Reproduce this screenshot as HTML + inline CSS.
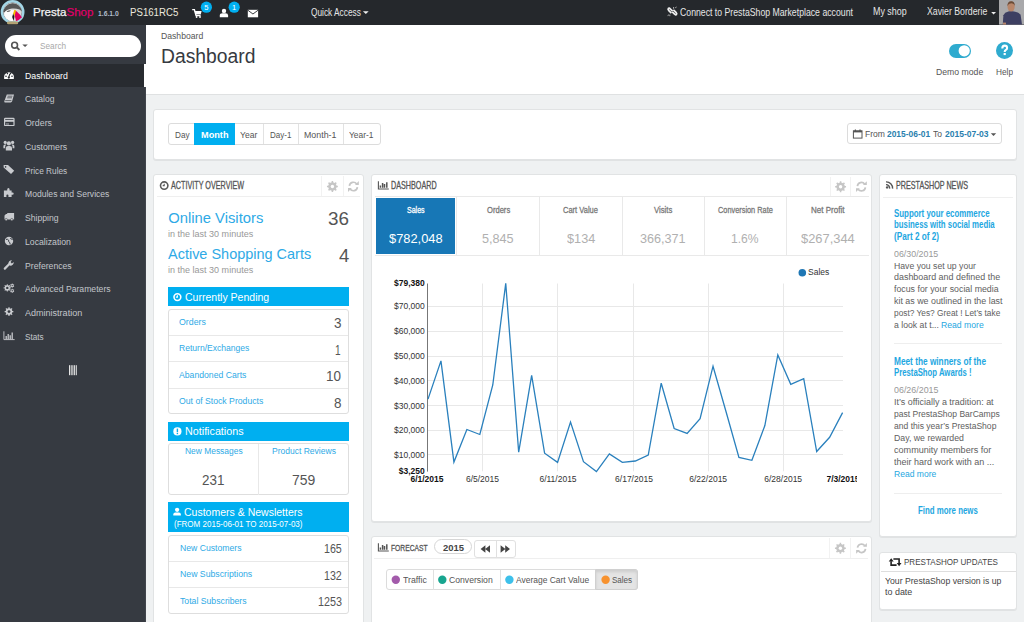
<!DOCTYPE html>
<html><head><meta charset="utf-8"><title>Dashboard</title>
<style>
*{box-sizing:border-box;margin:0;padding:0}
html,body{width:1024px;height:622px;overflow:hidden;background:#eff1f2;font-family:"Liberation Sans",sans-serif;color:#555;position:relative}
.a{position:absolute}
.t{position:absolute;white-space:nowrap;transform-origin:0 0;font-family:"Liberation Sans",sans-serif}
</style></head><body>
<div class="a" style="left:0px;top:0px;width:1024.00px;height:25.00px;background:#25282c"></div>
<div class="a" style="left:144px;top:25px;width:880.00px;height:70.00px;background:#fff"></div>
<div class="a" style="left:146px;top:94px;width:878.00px;height:1.00px;background:#dfe1e2"></div>
<div class="a" style="left:0px;top:25px;width:146.00px;height:38.50px;background:#363a41"></div>
<div class="a" style="left:0px;top:63.5px;width:144.00px;height:23.20px;background:#282b30"></div>
<div class="a" style="left:0px;top:86.7px;width:146.00px;height:535.30px;background:#363a41"></div>
<div class="a" style="left:145px;top:86.7px;width:1.00px;height:535.30px;background:#41454c"></div>
<div class="a" style="left:5.1px;top:34.6px;width:136.30px;height:22.00px;background:#fff;border-radius:11px"></div>
<div class="a" style="left:948.7px;top:43.9px;width:22.20px;height:13.80px;background:#2fabcf;border-radius:7px"></div>
<div class="a" style="left:153px;top:108.5px;width:864.00px;height:51.00px;background:#fff;border:1px solid #e1e3e4;border-radius:3px;box-shadow:0 1px 0 rgba(0,0,0,0.06)"></div>
<div class="a" style="left:168.3px;top:123.3px;width:212.30px;height:21.40px;border:1px solid #dcdcdc;border-radius:3px;background:#fff"></div>
<div class="a" style="left:194.1px;top:123.3px;width:40.70px;height:21.40px;background:#00aff0"></div>
<div class="a" style="left:263.3px;top:123.8px;width:1.00px;height:20.40px;background:#e2e2e2"></div>
<div class="a" style="left:297.5px;top:123.8px;width:1.00px;height:20.40px;background:#e2e2e2"></div>
<div class="a" style="left:343.3px;top:123.8px;width:1.00px;height:20.40px;background:#e2e2e2"></div>
<div class="a" style="left:847.2px;top:123.4px;width:155.10px;height:20.90px;border:1px solid #dcdcdc;border-radius:3px;background:#fff"></div>
<div class="a" style="left:153px;top:173.5px;width:211.00px;height:466.50px;background:#fff;border:1px solid #e1e3e4;border-radius:3px;box-shadow:0 1px 0 rgba(0,0,0,0.06)"></div>
<div class="a" style="left:157px;top:196.2px;width:203.00px;height:1.00px;background:#efefef"></div>
<div class="a" style="left:321.4px;top:176px;width:1.00px;height:20.20px;background:#f2f2f2"></div>
<div class="a" style="left:342.7px;top:176px;width:1.00px;height:20.20px;background:#f2f2f2"></div>
<div class="a" style="left:167.8px;top:287.2px;width:181.20px;height:18.60px;background:#00aff0"></div>
<div class="a" style="left:168.4px;top:308.7px;width:180.30px;height:105.60px;border:1px solid #dedede;border-radius:3px"></div>
<div class="a" style="left:169px;top:334.7px;width:179.00px;height:1.00px;background:#e8e8e8"></div>
<div class="a" style="left:169px;top:361.3px;width:179.00px;height:1.00px;background:#e8e8e8"></div>
<div class="a" style="left:169px;top:387.9px;width:179.00px;height:1.00px;background:#e8e8e8"></div>
<div class="a" style="left:167.8px;top:422.1px;width:181.20px;height:18.60px;background:#00aff0"></div>
<div class="a" style="left:168.4px;top:443px;width:180.30px;height:52.00px;border:1px solid #dedede;border-radius:3px"></div>
<div class="a" style="left:258px;top:443.5px;width:1.00px;height:51.00px;background:#e8e8e8"></div>
<div class="a" style="left:168.2px;top:502.2px;width:180.90px;height:29.70px;background:#00aff0"></div>
<div class="a" style="left:168.4px;top:534.6px;width:180.30px;height:79.40px;border:1px solid #dedede;border-radius:3px"></div>
<div class="a" style="left:169px;top:560.6px;width:179.00px;height:1.00px;background:#e8e8e8"></div>
<div class="a" style="left:169px;top:587.3px;width:179.00px;height:1.00px;background:#e8e8e8"></div>
<div class="a" style="left:371px;top:173.5px;width:501.00px;height:348.00px;background:#fff;border:1px solid #e1e3e4;border-radius:3px;box-shadow:0 1px 0 rgba(0,0,0,0.06)"></div>
<div class="a" style="left:829.7px;top:176.5px;width:1.00px;height:19.90px;background:#f2f2f2"></div>
<div class="a" style="left:850.3px;top:176.5px;width:1.00px;height:19.90px;background:#f2f2f2"></div>
<div class="a" style="left:374.5px;top:196px;width:494.20px;height:60.00px;border-top:1px solid #e9e9e9;border-bottom:1px solid #e9e9e9"></div>
<div class="a" style="left:375.9px;top:198.1px;width:79.30px;height:55.60px;background:#1777b6"></div>
<div class="a" style="left:456px;top:197px;width:1.00px;height:58.00px;background:#e9e9e9"></div>
<div class="a" style="left:539px;top:197px;width:1.00px;height:58.00px;background:#e9e9e9"></div>
<div class="a" style="left:622px;top:197px;width:1.00px;height:58.00px;background:#e9e9e9"></div>
<div class="a" style="left:704px;top:197px;width:1.00px;height:58.00px;background:#e9e9e9"></div>
<div class="a" style="left:786px;top:197px;width:1.00px;height:58.00px;background:#e9e9e9"></div>
<div class="a" style="left:879px;top:173.5px;width:138.00px;height:363.10px;background:#fff;border:1px solid #e1e3e4;border-radius:3px;box-shadow:0 1px 0 rgba(0,0,0,0.06)"></div>
<div class="a" style="left:882.6px;top:196.5px;width:130.60px;height:1.00px;background:#efefef"></div>
<div class="a" style="left:893.7px;top:342.8px;width:108.50px;height:1.00px;background:#eeeeee"></div>
<div class="a" style="left:893.7px;top:492.5px;width:107.90px;height:1.00px;background:#eeeeee"></div>
<div class="a" style="left:879px;top:551.5px;width:138.00px;height:58.50px;background:#fff;border:1px solid #e1e3e4;border-radius:3px;box-shadow:0 1px 0 rgba(0,0,0,0.06)"></div>
<div class="a" style="left:880.5px;top:571.3px;width:135.00px;height:1.00px;background:#dedede"></div>
<div class="a" style="left:371px;top:536px;width:501.00px;height:124.00px;background:#fff;border:1px solid #e1e3e4;border-radius:3px;box-shadow:0 1px 0 rgba(0,0,0,0.06)"></div>
<div class="a" style="left:434.2px;top:539.4px;width:37.50px;height:14.20px;border:1px solid #d6d6d6;border-radius:8px"></div>
<div class="a" style="left:474.4px;top:540.3px;width:41.85px;height:18.00px;border:1px solid #e0e0e0;border-radius:3px"></div>
<div class="a" style="left:495.5px;top:540.8px;width:1.00px;height:17.00px;background:#e0e0e0"></div>
<div class="a" style="left:374.4px;top:558.4px;width:493.60px;height:1.00px;background:#efefef"></div>
<div class="a" style="left:829.4px;top:538px;width:1.00px;height:20.40px;background:#f2f2f2"></div>
<div class="a" style="left:850.3px;top:538px;width:1.00px;height:20.40px;background:#f2f2f2"></div>
<div class="a" style="left:385.6px;top:569px;width:252.80px;height:21.20px;border:1px solid #dcdcdc;border-radius:3px"></div>
<div class="a" style="left:595.3px;top:569px;width:43.10px;height:21.20px;background:#e4e4e4;border:1px solid #d0d0d0;border-radius:0 3px 3px 0;box-shadow:inset 0 2px 3px rgba(0,0,0,0.1)"></div>
<div class="a" style="left:432.5px;top:569.5px;width:1.00px;height:20.20px;background:#e0e0e0"></div>
<div class="a" style="left:499.5px;top:569.5px;width:1.00px;height:20.20px;background:#e0e0e0"></div>
<svg class="a" style="left:0;top:0" width="1024" height="622"><circle cx="12.6" cy="11.9" r="10.6" fill="none" stroke="#a3d6e6" stroke-width="2.6"/><circle cx="12.6" cy="11.9" r="9.3" fill="#d9d9d9"/><path d="M3.4 12 A9.3 9.3 0 0 1 21.9 11.4 L19.5 9.6 Q16 8.2 12 8.6 Q7 9 4.4 12.6Z" fill="#575757"/><path d="M4.2 13 Q6.4 9.6 11 9.8 L15 10.4 L14 16 L13.2 21.2 Q9 21.6 6.2 18.6 Q4 16.2 4.2 13Z" fill="#fbfbfb"/><path d="M6.6 11.6 Q8.6 10.2 11 10.8 Q9 11.8 6.6 11.6Z" fill="#222"/><path d="M15.2 10.6 Q17.4 11.6 22 17.2 Q19.4 19.8 16.2 21.2 L14.6 15.6 Z" fill="#e2005f"/><path d="M14.4 9.8 L16 10.6 L14.4 16.8 L13.2 13.2Z" fill="#f2c200"/><path d="M13.2 13.6 L14.4 16.8 L13.6 21 L12.2 17Z" fill="#1a1a1a"/><rect x="7" y="21.4" width="11.2" height="2.8" rx="1.2" fill="#b3a274"/><path d="M192.2 9.6 H194.4 L196 15.6 H200.6" fill="none" stroke="#fff" stroke-width="1.4"/><path d="M194.4 11 H201.6 L200.8 14.6 H195.6Z" fill="#fff"/><circle cx="196.6" cy="17" r="0.9" fill="#fff"/><circle cx="200" cy="17" r="0.9" fill="#fff"/><circle cx="206.4" cy="7.2" r="5.6" fill="#00aff0"/><circle cx="224" cy="10.9" r="2.2" fill="#fff"/><path d="M219.8 17.3 V15.6 Q219.8 13.3 222.4 13.3 H225.6 Q228.1 13.3 228.1 15.6 V17.3Z" fill="#fff"/><circle cx="234.2" cy="7.2" r="5.6" fill="#00aff0"/><rect x="247.8" y="9.8" width="10.3" height="7.5" fill="#fff"/><path d="M247.8 10.2 L252.95 14 L258.1 10.2" fill="none" stroke="#25282c" stroke-width="0.9"/><path d="M362.9 11.2 H368.7 L365.8 14Z" fill="#eee"/><path d="M672.6 11.2 L670.2 8.8 Q669 7.6 668.4 8.4 Q667.6 9.4 668.8 10.6 L671.4 13.2" fill="none" stroke="#eee" stroke-width="1.7"/><path d="M672.2 11.8 L674.6 14.2 Q675.8 15.4 676.4 14.6 Q677.2 13.6 676 12.4 L673.4 9.8" fill="none" stroke="#eee" stroke-width="1.7"/><path d="M673.6 7 V8.8 M675.2 7.8 L676.6 7 M667.6 15.6 L669 14.8 M669.8 16.2 V14.6" stroke="#bbb" stroke-width="0.9"/><path d="M991.2 12 H996 L993.6 14.6Z" fill="#eee"/><rect x="999" y="0" width="25" height="24.6" fill="#a9a9ab"/><path d="M1002.8 24.6 L1003.4 15.2 Q1004.6 12.2 1008.4 11.4 L1011 11 L1014 11.4 Q1018.6 12.2 1020.6 14.8 L1022 24.6Z" fill="#3d3f62"/><ellipse cx="1011.1" cy="6.6" rx="3.6" ry="5" fill="#b8866a"/><path d="M1007.4 6 Q1007.4 1.2 1011.2 1.2 Q1015 1.2 1014.8 6 Q1014 3.2 1011.2 3.2 Q1008.4 3.2 1007.4 6Z" fill="#6a4a36"/><rect x="1003" y="22.6" width="3" height="2" fill="#b8866a"/><circle cx="14.6" cy="45.2" r="2.9" fill="none" stroke="#555" stroke-width="1.6"/><path d="M16.6 47.2 L19.4 50" stroke="#555" stroke-width="1.9"/><path d="M22.3 44.4 H27.8 L25.05 46.9Z" fill="#555"/><path d="M4.2 79 Q3.8 76.4 4.6 74.8 A5 5 0 0 1 13.4 74.8 Q14.2 76.4 13.8 79Z" fill="#fff"/><circle cx="6" cy="76.2" r="0.8" fill="#282b30"/><circle cx="7.4" cy="73.6" r="0.8" fill="#282b30"/><circle cx="10.6" cy="73.6" r="0.8" fill="#282b30"/><circle cx="12" cy="76.2" r="0.8" fill="#282b30"/><path d="M8.6 78 L9.8 73.8" stroke="#282b30" stroke-width="1.1"/><circle cx="8.8" cy="77.6" r="1.1" fill="#282b30"/><path d="M6.8 94.4 H14 L12.2 101 Q11.9 102.4 10.6 102.4 H5.2 Q4 102.4 4.3 101.2 Z" fill="#c9cbcf"/><path d="M7.6 96.2 H12.4 M7.2 97.8 H12 M5.2 100.6 H11.4" stroke="#363a41" stroke-width="0.7"/><rect x="4.6" y="118.3" width="9.4" height="7.2" rx="0.6" fill="none" stroke="#c9cbcf" stroke-width="1.2"/><rect x="4.6" y="119.8" width="9.4" height="2" fill="#c9cbcf"/><path d="M6 124 H9" stroke="#c9cbcf" stroke-width="0.8"/><circle cx="8.9" cy="143.4" r="2.1" fill="#c9cbcf"/><circle cx="5.2" cy="142.4" r="1.6" fill="#c9cbcf"/><circle cx="12.6" cy="142.4" r="1.6" fill="#c9cbcf"/><path d="M5.8 150.5 V148 Q5.8 145.9 8 145.9 H9.8 Q12 145.9 12 148 V150.5Z" fill="#c9cbcf"/><path d="M3.4 148.2 V146 Q3.4 144.4 5 144.4 H6.4 L5.2 146 V148.2Z M14.4 148.2 V146 Q14.4 144.4 12.8 144.4 H11.4 L12.6 146 V148.2Z" fill="#c9cbcf"/><path d="M3.6 165 H8 L14.2 170.8 L11 173.9 L3.6 167.4Z" fill="#c9cbcf"/><circle cx="5.6" cy="166.9" r="0.8" fill="#363a41"/><path d="M3.9 190.6 H7.2 V189.6 Q7.2 188 8.4 188 Q9.6 188 9.6 189.6 V190.6 H11.6 V192.6 H12.4 Q13.7 192.6 13.7 193.7 Q13.7 194.8 12.4 194.8 H11.6 V197 H3.9Z" fill="#c9cbcf"/><path d="M6.4 197 V195.6 Q6.4 194.6 7.4 194.6 Q8.4 194.6 8.4 195.6 V197Z" fill="#363a41"/><path d="M7.2 212.9 H14.1 V219.4 H7.2Z M4.5 215.4 L6 214 H7.4 V219.4 H4.5Z" fill="#c9cbcf"/><circle cx="6.2" cy="219.6" r="1.2" fill="#c9cbcf" stroke="#363a41" stroke-width="0.5"/><circle cx="11.8" cy="219.6" r="1.2" fill="#c9cbcf" stroke="#363a41" stroke-width="0.5"/><circle cx="9" cy="241.05" r="4.2" fill="#c9cbcf"/><path d="M6 239.4 Q7.6 238.8 8.6 240.2 Q8.2 241.8 9.8 242.6 L10.2 244.6 M10.4 238 Q11 239.4 12.6 239.6" stroke="#363a41" stroke-width="1" fill="none"/><path d="M4.8 268.6 L9.6 263.8" stroke="#c9cbcf" stroke-width="2.2" stroke-linecap="round"/><path d="M8.6 264.2 A3.2 3.2 0 0 1 12 260.2 L10.6 262 L11.8 263.4 L13.7 262 A3.2 3.2 0 0 1 9.8 265.6Z" fill="#c9cbcf"/><path d="M6.84 285.14 L6.75 284.24 L7.85 284.24 L7.76 285.14 L8.93 285.62 L9.50 284.93 L10.27 285.70 L9.58 286.27 L10.06 287.44 L10.96 287.35 L10.96 288.45 L10.06 288.36 L9.58 289.53 L10.27 290.10 L9.50 290.87 L8.93 290.18 L7.76 290.66 L7.85 291.56 L6.75 291.56 L6.84 290.66 L5.67 290.18 L5.10 290.87 L4.33 290.10 L5.02 289.53 L4.54 288.36 L3.64 288.45 L3.64 287.35 L4.54 287.44 L5.02 286.27 L4.33 285.70 L5.10 284.93 L5.67 285.62Z" fill="#c9cbcf"/><circle cx="7.3" cy="287.9" r="1.2" fill="#363a41"/><path d="M11.85 284.04 L11.77 283.44 L12.63 283.44 L12.55 284.04 L13.38 284.52 L13.85 284.15 L14.28 284.90 L13.73 285.12 L13.73 286.08 L14.28 286.30 L13.85 287.05 L13.38 286.68 L12.55 287.16 L12.63 287.76 L11.77 287.76 L11.85 287.16 L11.02 286.68 L10.55 287.05 L10.12 286.30 L10.67 286.08 L10.67 285.12 L10.12 284.90 L10.55 284.15 L11.02 284.52Z" fill="#c9cbcf"/><circle cx="12.2" cy="285.6" r="0.7" fill="#363a41"/><path d="M11.85 289.24 L11.77 288.64 L12.63 288.64 L12.55 289.24 L13.38 289.72 L13.85 289.35 L14.28 290.10 L13.73 290.32 L13.73 291.28 L14.28 291.50 L13.85 292.25 L13.38 291.88 L12.55 292.36 L12.63 292.96 L11.77 292.96 L11.85 292.36 L11.02 291.88 L10.55 292.25 L10.12 291.50 L10.67 291.28 L10.67 290.32 L10.12 290.10 L10.55 289.35 L11.02 289.72Z" fill="#c9cbcf"/><circle cx="12.2" cy="290.8" r="0.7" fill="#363a41"/><path d="M8.44 308.25 L8.35 307.25 L9.65 307.25 L9.56 308.25 L10.98 308.83 L11.62 308.06 L12.54 308.98 L11.77 309.62 L12.35 311.04 L13.35 310.95 L13.35 312.25 L12.35 312.16 L11.77 313.58 L12.54 314.22 L11.62 315.14 L10.98 314.37 L9.56 314.95 L9.65 315.95 L8.35 315.95 L8.44 314.95 L7.02 314.37 L6.38 315.14 L5.46 314.22 L6.23 313.58 L5.65 312.16 L4.65 312.25 L4.65 310.95 L5.65 311.04 L6.23 309.62 L5.46 308.98 L6.38 308.06 L7.02 308.83Z" fill="#c9cbcf"/><circle cx="9" cy="311.6" r="1.4" fill="#363a41"/><path d="M3.9 331.3 V339.6 H14.6" fill="none" stroke="#c9cbcf" stroke-width="0.9"/><path d="M6.2 339.2 V336 M8.2 339.2 V334 M10.2 339.2 V335.2 M12.2 339.2 V332.6" stroke="#c9cbcf" stroke-width="1.3"/><path d="M69.5 365.2 V375.2 M71.2 365.2 V375.2 M72.9 365.2 V375.2 M74.6 365.2 V375.2 M76.3 365.2 V375.2" stroke="#e6e6e6" stroke-width="1"/><circle cx="964.2" cy="50.8" r="5.6" fill="#fff"/><circle cx="1004.5" cy="50.5" r="8.5" fill="#2fabcf"/><path d="M1002.3 48.4 Q1002.3 45.6 1004.7 45.6 Q1007.1 45.6 1007.1 47.9 Q1007.1 49.3 1005.6 50.1 Q1004.7 50.6 1004.7 52" fill="none" stroke="#fff" stroke-width="2.1"/><rect x="1003.6" y="53" width="2.2" height="2.1" fill="#fff"/><rect x="853.4" y="130.8" width="8.6" height="7.3" fill="none" stroke="#555" stroke-width="1"/><rect x="853.4" y="130.8" width="8.6" height="1.6" fill="#555"/><path d="M855.4 129.4 V131.4 M860 129.4 V131.4" stroke="#555" stroke-width="1.2"/><path d="M990.8 133.2 H996.2 L993.5 136Z" fill="#555"/><path d="M331.69 182.26 L331.59 181.06 L333.21 181.06 L333.11 182.26 L334.90 183.00 L335.67 182.08 L336.82 183.23 L335.90 184.00 L336.64 185.79 L337.84 185.69 L337.84 187.31 L336.64 187.21 L335.90 189.00 L336.82 189.77 L335.67 190.92 L334.90 190.00 L333.11 190.74 L333.21 191.94 L331.59 191.94 L331.69 190.74 L329.90 190.00 L329.13 190.92 L327.98 189.77 L328.90 189.00 L328.16 187.21 L326.96 187.31 L326.96 185.69 L328.16 185.79 L328.90 184.00 L327.98 183.23 L329.13 182.08 L329.90 183.00Z" fill="#c6c6c6"/><circle cx="332.4" cy="186.5" r="1.7" fill="#fff"/><path d="M349.40 185.90 A4.0 4.0 0 0 1 356.68 184.02" fill="none" stroke="#c6c6c6" stroke-width="1.7"/><path d="M357.40 187.10 A4.0 4.0 0 0 1 350.12 188.98" fill="none" stroke="#c6c6c6" stroke-width="1.7"/><path d="M355.00 184.90 L358.80 184.90 L358.80 181.10Z" fill="#c6c6c6"/><path d="M351.80 188.10 L348.00 188.10 L348.00 191.90Z" fill="#c6c6c6"/><circle cx="164.2" cy="185.6" r="3.7" fill="none" stroke="#5a5a5a" stroke-width="1.6"/><path d="M164.2 183.79999999999998 V185.6 H162.7" fill="none" stroke="#5a5a5a" stroke-width="1.1"/><circle cx="177.4" cy="297.1" r="3.4" fill="none" stroke="#fff" stroke-width="1.6"/><path d="M177.4 295.3 V297.1 H175.9" fill="none" stroke="#fff" stroke-width="1.1"/><circle cx="177.4" cy="431.4" r="4.1" fill="#fff"/><rect x="176.7" y="428.6" width="1.4" height="3.6" fill="#00aff0"/><rect x="176.7" y="432.9" width="1.4" height="1.3" fill="#00aff0"/><circle cx="177.1" cy="509.8" r="2.1" fill="#fff"/><path d="M173.3 515.6 V514.4 Q173.3 512.4 175.3 512.4 H178.9 Q180.9 512.4 180.9 514.4 V515.6Z" fill="#fff"/><path d="M378.4 181.2 V189 H388.8" fill="none" stroke="#555" stroke-width="1.1"/><path d="M380.4 187.8 V185.6 M382.6 187.8 V182.9 M384.5 187.8 V183.9 M386.8 187.8 V182.2" stroke="#555" stroke-width="1.5"/><path d="M839.89 182.46 L839.79 181.26 L841.41 181.26 L841.31 182.46 L843.10 183.20 L843.87 182.28 L845.02 183.43 L844.10 184.20 L844.84 185.99 L846.04 185.89 L846.04 187.51 L844.84 187.41 L844.10 189.20 L845.02 189.97 L843.87 191.12 L843.10 190.20 L841.31 190.94 L841.41 192.14 L839.79 192.14 L839.89 190.94 L838.10 190.20 L837.33 191.12 L836.18 189.97 L837.10 189.20 L836.36 187.41 L835.16 187.51 L835.16 185.89 L836.36 185.99 L837.10 184.20 L836.18 183.43 L837.33 182.28 L838.10 183.20Z" fill="#c6c6c6"/><circle cx="840.6" cy="186.7" r="1.7" fill="#fff"/><path d="M857.40 186.10 A4.0 4.0 0 0 1 864.68 184.22" fill="none" stroke="#c6c6c6" stroke-width="1.7"/><path d="M865.40 187.30 A4.0 4.0 0 0 1 858.12 189.18" fill="none" stroke="#c6c6c6" stroke-width="1.7"/><path d="M863.00 185.10 L866.80 185.10 L866.80 181.30Z" fill="#c6c6c6"/><path d="M859.80 188.30 L856.00 188.30 L856.00 192.10Z" fill="#c6c6c6"/><path d="M428 306.5 H843" stroke="#e8e8e8" stroke-width="1"/><path d="M428 331.5 H843" stroke="#e8e8e8" stroke-width="1"/><path d="M428 356.5 H843" stroke="#e8e8e8" stroke-width="1"/><path d="M428 380.5 H843" stroke="#e8e8e8" stroke-width="1"/><path d="M428 405.5 H843" stroke="#e8e8e8" stroke-width="1"/><path d="M428 430.5 H843" stroke="#e8e8e8" stroke-width="1"/><path d="M428 454.5 H843" stroke="#e8e8e8" stroke-width="1"/><path d="M482.5 283.5 V471.3" stroke="#e8e8e8" stroke-width="1"/><path d="M557.5 283.5 V471.3" stroke="#e8e8e8" stroke-width="1"/><path d="M633.5 283.5 V471.3" stroke="#e8e8e8" stroke-width="1"/><path d="M708.5 283.5 V471.3" stroke="#e8e8e8" stroke-width="1"/><path d="M783.5 283.5 V471.3" stroke="#e8e8e8" stroke-width="1"/><path d="M427.5 283.5 V471.6" stroke="#777" stroke-width="1"/><polyline points="428.00,399.1 440.96,360.9 453.91,462.1 466.87,429.5 479.82,434.5 492.78,385 505.74,283.4 518.69,452.2 531.65,375.4 544.60,453.2 557.56,462.4 570.52,422.1 583.47,461.7 596.43,471.6 609.38,453.9 622.34,462.4 635.30,461 648.25,455 661.21,383.2 674.16,428.5 687.12,433.4 700.08,418.6 713.03,366.2 725.99,411.5 738.94,457.5 751.90,460.3 764.86,425.6 777.81,354.9 790.77,384.3 803.72,378.6 816.68,451.5 829.64,437.3 842.59,412.6" fill="none" stroke="#2a80bd" stroke-width="1.3" stroke-linejoin="miter"/><circle cx="802.3" cy="272.7" r="3.8" fill="#1f77b4"/><circle cx="887.1" cy="187.4" r="1.2" fill="#555"/><path d="M886 184.6 A3.6 3.6 0 0 1 889.6 188.6 M886 181.9 A6.3 6.3 0 0 1 892.6 188.6" fill="none" stroke="#555" stroke-width="1.4"/><path d="M891.1 561.2 V565.1 H896.6 M893.4 559 H899.1 V563.4" fill="none" stroke="#222" stroke-width="1.6"/><path d="M888.7 561.6 L891.2 558.3 L893.7 561.6Z M896.7 563 L899.1 566.2 L901.5 563Z" fill="#222"/><path d="M378.4 543.2 V551 H388.8" fill="none" stroke="#555" stroke-width="1.1"/><path d="M380.4 549.8 V547.6 M382.6 549.8 V544.9 M384.5 549.8 V545.9 M386.8 549.8 V544.2" stroke="#555" stroke-width="1.5"/><path d="M485.4 545.3 L480.6 549 L485.4 552.8Z M490 545.3 L485.2 549 L490 552.8Z" fill="#444"/><path d="M500.6 545.3 L505.4 549 L500.6 552.8Z M505.2 545.3 L510 549 L505.2 552.8Z" fill="#444"/><path d="M839.69 544.06 L839.59 542.86 L841.21 542.86 L841.11 544.06 L842.90 544.80 L843.67 543.88 L844.82 545.03 L843.90 545.80 L844.64 547.59 L845.84 547.49 L845.84 549.11 L844.64 549.01 L843.90 550.80 L844.82 551.57 L843.67 552.72 L842.90 551.80 L841.11 552.54 L841.21 553.74 L839.59 553.74 L839.69 552.54 L837.90 551.80 L837.13 552.72 L835.98 551.57 L836.90 550.80 L836.16 549.01 L834.96 549.11 L834.96 547.49 L836.16 547.59 L836.90 545.80 L835.98 545.03 L837.13 543.88 L837.90 544.80Z" fill="#c6c6c6"/><circle cx="840.4" cy="548.3" r="1.7" fill="#fff"/><path d="M857.50 547.70 A4.0 4.0 0 0 1 864.78 545.82" fill="none" stroke="#c6c6c6" stroke-width="1.7"/><path d="M865.50 548.90 A4.0 4.0 0 0 1 858.22 550.78" fill="none" stroke="#c6c6c6" stroke-width="1.7"/><path d="M863.10 546.70 L866.90 546.70 L866.90 542.90Z" fill="#c6c6c6"/><path d="M859.90 549.90 L856.10 549.90 L856.10 553.70Z" fill="#c6c6c6"/><circle cx="395.8" cy="579.7" r="4.2" fill="#a35bab"/><circle cx="442.3" cy="579.7" r="4.2" fill="#17a58f"/><circle cx="509.4" cy="579.7" r="4.2" fill="#3dc0ea"/><circle cx="605.6" cy="579.7" r="4.2" fill="#f7922f"/></svg>
<div class="t" style="left:32.80px;top:7.10px;font-size:10.8px;line-height:10.8px;color:#f2f2f2;transform:scaleX(1.0720);-webkit-text-stroke:0.25px currentColor;">Presta<span style="color:#df0067">Shop</span></div>
<div class="t" style="left:98.00px;top:10.00px;font-size:7.78px;line-height:7.78px;color:#b0bccb;font-weight:700;transform:scaleX(0.8737);">1.6.1.0</div>
<div class="t" style="left:129.70px;top:7.40px;font-size:11.12px;line-height:11.12px;color:#ebe8de;transform:scaleX(0.8688);">PS161RC5</div>
<div class="t" style="left:311.00px;top:7.80px;font-size:10.26px;line-height:10.26px;color:#e6e6e6;transform:scaleX(0.8093);">Quick Access</div>
<div class="t" style="left:679.50px;top:7.80px;font-size:10.26px;line-height:10.26px;color:#e6e6e6;transform:scaleX(0.8500);">Connect to PrestaShop Marketplace account</div>
<div class="t" style="left:872.80px;top:7.40px;font-size:10.26px;line-height:10.26px;color:#e6e6e6;transform:scaleX(0.8671);">My shop</div>
<div class="t" style="left:927.00px;top:7.40px;font-size:10.26px;line-height:10.26px;color:#e6e6e6;transform:scaleX(0.8534);">Xavier Borderie</div>
<div class="t" style="left:39.80px;top:41.50px;font-size:9.29px;line-height:9.29px;color:#a9a9a9;transform:scaleX(0.8871);">Search</div>
<div class="t" style="left:24.80px;top:70.75px;font-size:9.94px;line-height:9.94px;color:#ffffff;transform:scaleX(0.8837);">Dashboard</div>
<div class="t" style="left:24.80px;top:94.49px;font-size:9.94px;line-height:9.94px;color:#c3c6cb;transform:scaleX(0.8625);">Catalog</div>
<div class="t" style="left:24.80px;top:118.23px;font-size:9.94px;line-height:9.94px;color:#c3c6cb;transform:scaleX(0.8903);">Orders</div>
<div class="t" style="left:24.80px;top:141.97px;font-size:9.94px;line-height:9.94px;color:#c3c6cb;transform:scaleX(0.8797);">Customers</div>
<div class="t" style="left:24.80px;top:165.71px;font-size:9.94px;line-height:9.94px;color:#c3c6cb;transform:scaleX(0.8318);">Price Rules</div>
<div class="t" style="left:24.80px;top:189.45px;font-size:9.94px;line-height:9.94px;color:#c3c6cb;transform:scaleX(0.8645);">Modules and Services</div>
<div class="t" style="left:24.80px;top:213.19px;font-size:9.94px;line-height:9.94px;color:#c3c6cb;transform:scaleX(0.8699);">Shipping</div>
<div class="t" style="left:24.80px;top:236.93px;font-size:9.94px;line-height:9.94px;color:#c3c6cb;transform:scaleX(0.8758);">Localization</div>
<div class="t" style="left:24.80px;top:260.67px;font-size:9.94px;line-height:9.94px;color:#c3c6cb;transform:scaleX(0.8729);">Preferences</div>
<div class="t" style="left:24.80px;top:284.41px;font-size:9.94px;line-height:9.94px;color:#c3c6cb;transform:scaleX(0.8719);">Advanced Parameters</div>
<div class="t" style="left:24.80px;top:308.15px;font-size:9.94px;line-height:9.94px;color:#c3c6cb;transform:scaleX(0.9097);">Administration</div>
<div class="t" style="left:24.80px;top:331.89px;font-size:9.94px;line-height:9.94px;color:#c3c6cb;transform:scaleX(0.8265);">Stats</div>
<div class="t" style="left:160.80px;top:30.50px;font-size:9.4px;line-height:9.4px;color:#555;transform:scaleX(0.9199);">Dashboard</div>
<div class="t" style="left:161.10px;top:46.10px;font-size:20.41px;line-height:20.41px;color:#363a41;transform:scaleX(0.9455);">Dashboard</div>
<div class="t" style="left:935.80px;top:66.80px;font-size:9.72px;line-height:9.72px;color:#555;transform:scaleX(0.8916);">Demo mode</div>
<div class="t" style="left:996.00px;top:66.80px;font-size:9.72px;line-height:9.72px;color:#555;transform:scaleX(0.8500);">Help</div>
<div class="t" style="left:174.60px;top:129.50px;font-size:9.72px;line-height:9.72px;color:#555;transform:scaleX(0.8441);">Day</div>
<div class="t" style="left:201.00px;top:129.50px;font-size:9.72px;line-height:9.72px;color:#fff;font-weight:700;transform:scaleX(0.9432);">Month</div>
<div class="t" style="left:240.40px;top:129.50px;font-size:9.72px;line-height:9.72px;color:#555;transform:scaleX(0.8808);">Year</div>
<div class="t" style="left:270.00px;top:129.50px;font-size:9.72px;line-height:9.72px;color:#555;transform:scaleX(0.8251);">Day-1</div>
<div class="t" style="left:304.40px;top:129.50px;font-size:9.72px;line-height:9.72px;color:#555;transform:scaleX(0.9087);">Month-1</div>
<div class="t" style="left:349.00px;top:129.50px;font-size:9.72px;line-height:9.72px;color:#555;transform:scaleX(0.8628);">Year-1</div>
<div class="t" style="left:864.60px;top:128.90px;font-size:9.72px;line-height:9.72px;color:#555;transform:scaleX(0.8815);">From</div>
<div class="t" style="left:887.30px;top:128.90px;font-size:9.72px;line-height:9.72px;color:#2a7fae;font-weight:700;transform:scaleX(0.8669);">2015-06-01</div>
<div class="t" style="left:933.00px;top:128.90px;font-size:9.72px;line-height:9.72px;color:#555;transform:scaleX(0.8767);">To</div>
<div class="t" style="left:944.80px;top:128.90px;font-size:9.72px;line-height:9.72px;color:#2a7fae;font-weight:700;transform:scaleX(0.8769);">2015-07-03</div>
<div class="t" style="left:170.80px;top:181.30px;font-size:10.2px;line-height:10.2px;color:#555;transform:scaleX(0.7082);-webkit-text-stroke:0.3px currentColor;">ACTIVITY OVERVIEW</div>
<div class="t" style="left:168.20px;top:210.50px;font-size:14.8px;line-height:14.8px;color:#2eaae6;">Online Visitors</div>
<div class="t" style="left:328.00px;top:209.40px;font-size:19.12px;line-height:19.12px;color:#555;transform:scaleX(0.9875);">36</div>
<div class="t" style="left:168.20px;top:229.70px;font-size:8.64px;line-height:8.64px;color:#999;transform:scaleX(1.0452);">in the last 30 minutes</div>
<div class="t" style="left:168.20px;top:247.10px;font-size:14.8px;line-height:14.8px;color:#2eaae6;transform:scaleX(0.9781);">Active Shopping Carts</div>
<div class="t" style="left:338.70px;top:246.00px;font-size:19.12px;line-height:19.12px;color:#555;transform:scaleX(0.9680);">4</div>
<div class="t" style="left:168.20px;top:265.70px;font-size:8.64px;line-height:8.64px;color:#999;transform:scaleX(1.0452);">in the last 30 minutes</div>
<div class="t" style="left:184.80px;top:290.50px;font-size:11.77px;line-height:11.77px;color:#fff;transform:scaleX(0.8940);">Currently Pending</div>
<div class="t" style="left:179.40px;top:318.00px;font-size:9.07px;line-height:9.07px;color:#2eaae6;transform:scaleX(0.9710);">Orders</div>
<div class="t" style="left:333.80px;top:316.10px;font-size:14.58px;line-height:14.58px;color:#555;transform:scaleX(0.9249);">3</div>
<div class="t" style="left:179.40px;top:344.40px;font-size:9.07px;line-height:9.07px;color:#2eaae6;transform:scaleX(0.9442);">Return/Exchanges</div>
<div class="t" style="left:334.70px;top:342.70px;font-size:14.58px;line-height:14.58px;color:#555;transform:scaleX(0.6906);">1</div>
<div class="t" style="left:179.40px;top:370.90px;font-size:9.07px;line-height:9.07px;color:#2eaae6;transform:scaleX(0.9554);">Abandoned Carts</div>
<div class="t" style="left:326.40px;top:369.20px;font-size:14.58px;line-height:14.58px;color:#555;transform:scaleX(0.9249);">10</div>
<div class="t" style="left:179.40px;top:397.40px;font-size:9.07px;line-height:9.07px;color:#2eaae6;transform:scaleX(0.9563);">Out of Stock Products</div>
<div class="t" style="left:333.80px;top:395.80px;font-size:14.58px;line-height:14.58px;color:#555;transform:scaleX(0.9249);">8</div>
<div class="t" style="left:184.80px;top:424.80px;font-size:11.77px;line-height:11.77px;color:#fff;transform:scaleX(0.9143);">Notifications</div>
<div class="t" style="left:185.00px;top:447.30px;font-size:9.29px;line-height:9.29px;color:#2eaae6;transform:scaleX(0.9078);">New Messages</div>
<div class="t" style="left:272.30px;top:447.30px;font-size:9.29px;line-height:9.29px;color:#2eaae6;transform:scaleX(0.9176);">Product Reviews</div>
<div class="t" style="left:201.60px;top:473.00px;font-size:14.47px;line-height:14.47px;color:#555;transform:scaleX(0.9279);">231</div>
<div class="t" style="left:292.40px;top:473.00px;font-size:14.47px;line-height:14.47px;color:#555;transform:scaleX(0.9652);">759</div>
<div class="t" style="left:184.00px;top:505.50px;font-size:11.77px;line-height:11.77px;color:#fff;transform:scaleX(0.8928);">Customers &amp; Newsletters</div>
<div class="t" style="left:173.50px;top:519.80px;font-size:9.07px;line-height:9.07px;color:#fff;transform:scaleX(0.8847);">(FROM 2015-06-01 TO 2015-07-03)</div>
<div class="t" style="left:179.50px;top:543.80px;font-size:9.07px;line-height:9.07px;color:#2eaae6;transform:scaleX(0.9540);">New Customers</div>
<div class="t" style="left:323.70px;top:542.80px;font-size:12.96px;line-height:12.96px;color:#555;transform:scaleX(0.8231);">165</div>
<div class="t" style="left:179.50px;top:570.40px;font-size:9.07px;line-height:9.07px;color:#2eaae6;transform:scaleX(0.9619);">New Subscriptions</div>
<div class="t" style="left:323.70px;top:569.50px;font-size:12.96px;line-height:12.96px;color:#555;transform:scaleX(0.8231);">132</div>
<div class="t" style="left:179.50px;top:596.70px;font-size:9.07px;line-height:9.07px;color:#2eaae6;transform:scaleX(0.9581);">Total Subscribers</div>
<div class="t" style="left:317.50px;top:595.70px;font-size:12.96px;line-height:12.96px;color:#555;transform:scaleX(0.8325);">1253</div>
<div class="t" style="left:391.40px;top:181.20px;font-size:10.1px;line-height:10.1px;color:#555;transform:scaleX(0.7130);-webkit-text-stroke:0.3px currentColor;">DASHBOARD</div>
<div class="t" style="left:406.80px;top:205.00px;font-size:9.8px;line-height:9.8px;color:#fff;transform:scaleX(0.7179);-webkit-text-stroke:0.3px currentColor;">Sales</div>
<div class="t" style="left:388.70px;top:232.00px;font-size:13.28px;line-height:13.28px;color:#fff;transform:scaleX(0.9685);">$782,048</div>
<div class="t" style="left:486.80px;top:205.00px;font-size:9.8px;line-height:9.8px;color:#777;transform:scaleX(0.7745);-webkit-text-stroke:0.3px currentColor;">Orders</div>
<div class="t" style="left:482.40px;top:232.00px;font-size:13.28px;line-height:13.28px;color:#b0b0b0;transform:scaleX(0.9517);">5,845</div>
<div class="t" style="left:563.20px;top:205.00px;font-size:9.8px;line-height:9.8px;color:#777;transform:scaleX(0.7660);-webkit-text-stroke:0.3px currentColor;">Cart Value</div>
<div class="t" style="left:566.50px;top:232.00px;font-size:13.28px;line-height:13.28px;color:#b0b0b0;transform:scaleX(0.9588);">$134</div>
<div class="t" style="left:653.70px;top:205.00px;font-size:9.8px;line-height:9.8px;color:#777;transform:scaleX(0.7876);-webkit-text-stroke:0.3px currentColor;">Visits</div>
<div class="t" style="left:639.60px;top:232.00px;font-size:13.28px;line-height:13.28px;color:#b0b0b0;transform:scaleX(0.9509);">366,371</div>
<div class="t" style="left:717.60px;top:205.00px;font-size:9.8px;line-height:9.8px;color:#777;transform:scaleX(0.7508);-webkit-text-stroke:0.3px currentColor;">Conversion Rate</div>
<div class="t" style="left:731.30px;top:232.00px;font-size:13.28px;line-height:13.28px;color:#b0b0b0;transform:scaleX(0.9124);">1.6%</div>
<div class="t" style="left:810.70px;top:205.00px;font-size:9.8px;line-height:9.8px;color:#777;transform:scaleX(0.8178);-webkit-text-stroke:0.3px currentColor;">Net Profit</div>
<div class="t" style="left:800.50px;top:232.00px;font-size:13.28px;line-height:13.28px;color:#b0b0b0;transform:scaleX(0.9721);">$267,344</div>
<div class="t" style="left:394.07px;top:278.90px;font-size:8.5px;line-height:8.5px;color:#111;font-weight:700;">$79,380</div>
<div class="t" style="left:394.07px;top:302.30px;font-size:8.5px;line-height:8.5px;color:#333;">$70,000</div>
<div class="t" style="left:394.07px;top:327.20px;font-size:8.5px;line-height:8.5px;color:#333;">$60,000</div>
<div class="t" style="left:394.07px;top:352.00px;font-size:8.5px;line-height:8.5px;color:#333;">$50,000</div>
<div class="t" style="left:394.07px;top:376.70px;font-size:8.5px;line-height:8.5px;color:#333;">$40,000</div>
<div class="t" style="left:394.07px;top:401.50px;font-size:8.5px;line-height:8.5px;color:#333;">$30,000</div>
<div class="t" style="left:394.07px;top:426.20px;font-size:8.5px;line-height:8.5px;color:#333;">$20,000</div>
<div class="t" style="left:394.07px;top:450.60px;font-size:8.5px;line-height:8.5px;color:#333;">$10,000</div>
<div class="t" style="left:398.80px;top:466.60px;font-size:8.5px;line-height:8.5px;color:#111;font-weight:700;">$3,250</div>
<div class="t" style="left:410.45px;top:475.00px;font-size:8.5px;line-height:8.5px;color:#111;font-weight:700;">6/1/2015</div>
<div class="t" style="left:465.95px;top:475.00px;font-size:8.5px;line-height:8.5px;color:#333;">6/5/2015</div>
<div class="t" style="left:539.41px;top:475.00px;font-size:8.5px;line-height:8.5px;color:#333;">6/11/2015</div>
<div class="t" style="left:615.09px;top:475.00px;font-size:8.5px;line-height:8.5px;color:#333;">6/17/2015</div>
<div class="t" style="left:689.29px;top:475.00px;font-size:8.5px;line-height:8.5px;color:#333;">6/22/2015</div>
<div class="t" style="left:764.29px;top:475.00px;font-size:8.5px;line-height:8.5px;color:#333;">6/28/2015</div>
<div class="t" style="left:826.45px;top:475.00px;font-size:8.5px;line-height:8.5px;color:#111;font-weight:700;clip-path:inset(0 2.6px 0 0);">7/3/2015</div>
<div class="t" style="left:808.00px;top:268.20px;font-size:8.5px;line-height:8.5px;color:#333;">Sales</div>
<div class="t" style="left:895.70px;top:181.10px;font-size:10.2px;line-height:10.2px;color:#555;transform:scaleX(0.7052);-webkit-text-stroke:0.3px currentColor;">PRESTASHOP NEWS</div>
<div class="t" style="left:893.60px;top:207.90px;font-size:10.6px;line-height:10.6px;color:#1ea7e1;font-weight:700;transform:scaleX(0.7449);">Support your ecommerce</div>
<div class="t" style="left:893.60px;top:219.20px;font-size:10.6px;line-height:10.6px;color:#1ea7e1;font-weight:700;transform:scaleX(0.7372);">business with social media</div>
<div class="t" style="left:893.60px;top:230.60px;font-size:10.6px;line-height:10.6px;color:#1ea7e1;font-weight:700;transform:scaleX(0.7721);">(Part 2 of 2)</div>
<div class="t" style="left:893.60px;top:249.60px;font-size:9.29px;line-height:9.29px;color:#999;transform:scaleX(0.9536);">06/30/2015</div>
<div class="t" style="left:893.70px;top:261.70px;font-size:9.29px;line-height:9.29px;color:#606060;transform:scaleX(0.9348);">Have you set up your</div>
<div class="t" style="left:893.70px;top:273.40px;font-size:9.29px;line-height:9.29px;color:#606060;transform:scaleX(0.9607);">dashboard and defined the</div>
<div class="t" style="left:893.70px;top:285.10px;font-size:9.29px;line-height:9.29px;color:#606060;transform:scaleX(0.9474);">focus for your social media</div>
<div class="t" style="left:893.70px;top:297.00px;font-size:9.29px;line-height:9.29px;color:#606060;transform:scaleX(0.9558);">kit as we outlined in the last</div>
<div class="t" style="left:893.70px;top:308.90px;font-size:9.29px;line-height:9.29px;color:#606060;transform:scaleX(0.8969);">post? Yes? Great ! Let&rsquo;s take</div>
<div class="t" style="left:893.70px;top:320.80px;font-size:9.29px;line-height:9.29px;color:#606060;transform:scaleX(0.9357);">a look at t...</div>
<div class="t" style="left:940.70px;top:320.80px;font-size:9.29px;line-height:9.29px;color:#1ea7e1;transform:scaleX(0.9298);">Read more</div>
<div class="t" style="left:893.70px;top:356.00px;font-size:10.6px;line-height:10.6px;color:#1ea7e1;font-weight:700;transform:scaleX(0.7814);">Meet the winners of the</div>
<div class="t" style="left:893.70px;top:367.30px;font-size:10.6px;line-height:10.6px;color:#1ea7e1;font-weight:700;transform:scaleX(0.7313);">PrestaShop Awards !</div>
<div class="t" style="left:893.70px;top:385.80px;font-size:9.29px;line-height:9.29px;color:#999;transform:scaleX(0.9580);">06/26/2015</div>
<div class="t" style="left:893.70px;top:398.20px;font-size:9.29px;line-height:9.29px;color:#606060;transform:scaleX(0.9636);">It&rsquo;s officially a tradition: at</div>
<div class="t" style="left:893.70px;top:410.10px;font-size:9.29px;line-height:9.29px;color:#606060;transform:scaleX(0.9188);">past PrestaShop BarCamps</div>
<div class="t" style="left:893.70px;top:422.00px;font-size:9.29px;line-height:9.29px;color:#606060;transform:scaleX(0.9216);">and this year&rsquo;s PrestaShop</div>
<div class="t" style="left:893.70px;top:433.90px;font-size:9.29px;line-height:9.29px;color:#606060;transform:scaleX(0.9432);">Day, we rewarded</div>
<div class="t" style="left:893.70px;top:445.80px;font-size:9.29px;line-height:9.29px;color:#606060;transform:scaleX(0.9784);">community members for</div>
<div class="t" style="left:893.70px;top:457.70px;font-size:9.29px;line-height:9.29px;color:#606060;transform:scaleX(0.9673);">their hard work with an ...</div>
<div class="t" style="left:893.70px;top:469.80px;font-size:9.29px;line-height:9.29px;color:#1ea7e1;transform:scaleX(0.9211);">Read more</div>
<div class="t" style="left:918.30px;top:504.80px;font-size:10.6px;line-height:10.6px;color:#1ea7e1;font-weight:700;transform:scaleX(0.7414);">Find more news</div>
<div class="t" style="left:904.20px;top:556.90px;font-size:9.94px;line-height:9.94px;color:#444;transform:scaleX(0.8118);">PRESTASHOP UPDATES</div>
<div class="t" style="left:885.30px;top:575.80px;font-size:9.5px;line-height:9.5px;color:#444;transform:scaleX(0.9125);">Your PrestaShop version is up</div>
<div class="t" style="left:885.30px;top:587.20px;font-size:9.5px;line-height:9.5px;color:#444;transform:scaleX(0.9394);">to date</div>
<div class="t" style="left:391.25px;top:542.80px;font-size:9.4px;line-height:9.4px;color:#555;transform:scaleX(0.7160);-webkit-text-stroke:0.3px currentColor;">FORECAST</div>
<div class="t" style="left:442.50px;top:543.80px;font-size:9.2px;line-height:9.2px;color:#444;font-weight:700;transform:scaleX(1.0267);">2015</div>
<div class="t" style="left:402.80px;top:574.80px;font-size:9.72px;line-height:9.72px;color:#555;transform:scaleX(0.9030);">Traffic</div>
<div class="t" style="left:449.40px;top:574.80px;font-size:9.72px;line-height:9.72px;color:#555;transform:scaleX(0.8887);">Conversion</div>
<div class="t" style="left:516.10px;top:574.80px;font-size:9.72px;line-height:9.72px;color:#555;transform:scaleX(0.8710);">Average Cart Value</div>
<div class="t" style="left:611.90px;top:574.80px;font-size:9.72px;line-height:9.72px;color:#555;transform:scaleX(0.8267);">Sales</div>
<div class="t" style="left:204.30px;top:4.20px;font-size:7.56px;line-height:7.56px;color:#fff;">5</div>
<div class="t" style="left:232.10px;top:4.20px;font-size:7.56px;line-height:7.56px;color:#fff;">1</div>
</body></html>
